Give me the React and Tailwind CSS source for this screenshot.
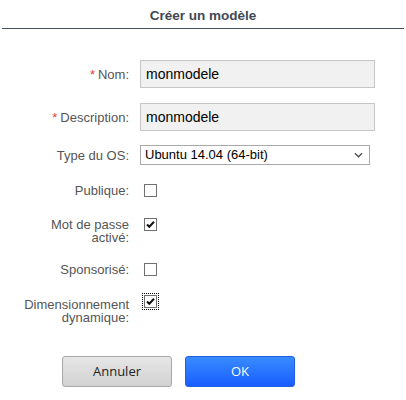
import React from 'react';

const Label = ({ required, children }) => (
  <div className="w-[106px] shrink-0 text-right text-[13px] leading-[13px] text-[#555]">
    {required && <span className="text-[#e04040] mr-[3px]">*</span>}
    {children}
  </div>
);

const Check = ({ checked, focused }) => (
  <div className={`ml-[15px] ${focused ? 'outline outline-1 outline-dotted outline-black outline-offset-[1px]' : ''}`}>
    <div className="w-[13px] h-[13px] border border-[#707070] bg-white flex items-center justify-center">
      {checked && (
        <svg viewBox="0 0 11 11" className="w-[11px] h-[11px]">
          <path d="M2 5.5 L4.3 7.8 L9 2.8" fill="none" stroke="#111" strokeWidth="2" />
        </svg>
      )}
    </div>
  </div>
);

export default function App() {
  return (
    <div className="w-[406px] h-[400px] bg-white font-['Liberation_Sans',Arial,sans-serif]">
      {/* Header */}
      <div className="mx-[2px] h-[29px] border-b border-[#4a5058] flex items-center justify-center pt-[4px]">
        <span className="text-[13.5px] font-bold text-[#3f4953]">Créer un modèle</span>
      </div>

      <div className="pl-[23px]">
        {/* Nom */}
        <div className="flex items-center mt-[31px]">
          <Label required>Nom:</Label>
          <input
            readOnly
            value="monmodele"
            className="ml-[11px] w-[235px] h-[28px] border border-[#c6c6c6] bg-[#f1f1f1] px-[5px] text-[14px] text-black outline-none font-['Liberation_Sans',Arial,sans-serif]"
          />
        </div>

        {/* Description */}
        <div className="flex items-center mt-[15px]">
          <Label required>Description:</Label>
          <input
            readOnly
            value="monmodele"
            className="ml-[11px] w-[235px] h-[28px] border border-[#c6c6c6] bg-[#f1f1f1] px-[5px] text-[14px] text-black outline-none font-['Liberation_Sans',Arial,sans-serif]"
          />
        </div>

        {/* Type du OS */}
        <div className="flex items-center mt-[14px]">
          <Label>Type du OS:</Label>
          <div className="ml-[11px] w-[230px] h-[20px] border border-[#a9a9a9] bg-white flex items-center justify-between pl-[4px] pr-[6px]">
            <span className="text-[13px] text-black">Ubuntu 14.04 (64-bit)</span>
            <svg viewBox="0 0 10 6" className="w-[9px] h-[6px]">
              <path d="M1 1 L5 5 L9 1" fill="none" stroke="#555" strokeWidth="1.6" />
            </svg>
          </div>
        </div>

        {/* Publique */}
        <div className="flex items-start mt-[19px]">
          <Label>Publique:</Label>
          <Check />
        </div>

        {/* Mot de passe */}
        <div className="flex items-start mt-[21px]">
          <Label>Mot de passe activé:</Label>
          <Check checked />
        </div>

        {/* Sponsorisé */}
        <div className="flex items-start mt-[19px]">
          <Label>Sponsorisé:</Label>
          <Check />
        </div>

        {/* Dimensionnement */}
        <div className="flex items-start mt-[22px]">
          <Label>Dimensionnement dynamique:</Label>
          <div className="-mt-[3px]">
            <Check checked focused />
          </div>
        </div>
      </div>

      {/* Buttons */}
      <div className="flex gap-[13px] pl-[62px] mt-[32px]">
        <button className="w-[110px] h-[31px] rounded-[3px] border border-[#a8a8a8] bg-gradient-to-b from-[#e6e6e6] to-[#d2d2d2] text-[13px] text-[#222] font-['Open_Sans',sans-serif]">
          Annuler
        </button>
        <button className="w-[110px] h-[31px] rounded-[3px] border border-[#1f5fe0] bg-gradient-to-b from-[#3a8bff] to-[#1a5cff] text-[13px] text-white font-['Open_Sans',sans-serif]">
          OK
        </button>
      </div>
    </div>
  );
}
